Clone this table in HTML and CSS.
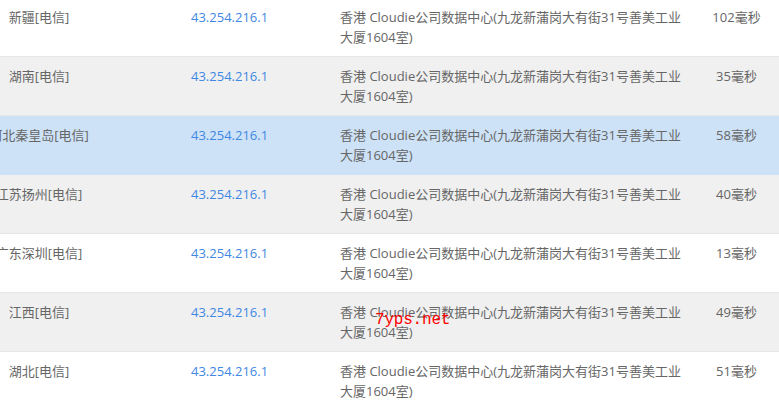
FILE: index.html
```html
<!DOCTYPE html>
<html lang="zh-CN">
<head>
<meta charset="utf-8">
<link rel="stylesheet" href="styles.css">
</head>
<body>
<div class="table">
  <div class="row">
    <div class="name">新疆[电信]</div>
    <div class="ip">43.254.216.1</div>
    <div class="loc">香港 Cloudie公司数据中心(九龙新蒲岗大有街31号善美工业大厦1604室)</div>
    <div class="ms">102毫秒</div>
  </div>
  <div class="row alt">
    <div class="name">湖南[电信]</div>
    <div class="ip">43.254.216.1</div>
    <div class="loc">香港 Cloudie公司数据中心(九龙新蒲岗大有街31号善美工业大厦1604室)</div>
    <div class="ms">35毫秒</div>
  </div>
  <div class="row hl">
    <div class="name">河北秦皇岛[电信]</div>
    <div class="ip">43.254.216.1</div>
    <div class="loc">香港 Cloudie公司数据中心(九龙新蒲岗大有街31号善美工业大厦1604室)</div>
    <div class="ms">58毫秒</div>
  </div>
  <div class="row alt">
    <div class="name">江苏扬州[电信]</div>
    <div class="ip">43.254.216.1</div>
    <div class="loc">香港 Cloudie公司数据中心(九龙新蒲岗大有街31号善美工业大厦1604室)</div>
    <div class="ms">40毫秒</div>
  </div>
  <div class="row">
    <div class="name">广东深圳[电信]</div>
    <div class="ip">43.254.216.1</div>
    <div class="loc">香港 Cloudie公司数据中心(九龙新蒲岗大有街31号善美工业大厦1604室)</div>
    <div class="ms">13毫秒</div>
  </div>
  <div class="row alt">
    <div class="name">江西[电信]</div>
    <div class="ip">43.254.216.1</div>
    <div class="loc">香港 Cloudie公司数据中心(九龙新蒲岗大有街31号善美工业大厦1604室)<span class="wm">7yps.net</span></div>
    <div class="ms">49毫秒</div>
  </div>
  <div class="row">
    <div class="name">湖北[电信]</div>
    <div class="ip">43.254.216.1</div>
    <div class="loc">香港 Cloudie公司数据中心(九龙新蒲岗大有街31号善美工业大厦1604室)</div>
    <div class="ms">51毫秒</div>
  </div>
</div>
</body>
</html>
```

FILE: styles.css
```css
html, body {
  margin: 0;
  padding: 0;
  background: #ffffff;
  overflow: hidden;
}
body {
  font-family: "Open Sans", "Noto Sans CJK SC", sans-serif;
  font-size: 13px;
  line-height: 20px;
  color: #666666;
}
.table {
  margin-top: -2px;
  width: 779px;
}
.row {
  display: grid;
  grid-template-columns: 78px 262px 354px 85px;
  padding: 9px 0;
  height: 40px;
  border-bottom: 1px solid #e6e6e6;
  background: #ffffff;
}
.row.alt {
  background: #f0f0f0;
}
.row.hl {
  background: #cde2f7;
  border-bottom-color: #cde2f7;
}
.name {
  white-space: nowrap;
  display: flex;
  justify-content: center;
}
.ip {
  padding-left: 113px;
  color: #3f88e3;
  white-space: nowrap;
}
.loc {
  position: relative;
  padding-right: 10px;
}
.ms {
  text-align: center;
}
.wm {
  position: absolute;
  left: 35px;
  top: 8px;
  font-family: "Liberation Mono", monospace;
  font-size: 16px;
  line-height: 20px;
  color: #ff0000;
  letter-spacing: -0.2px;
}
```
